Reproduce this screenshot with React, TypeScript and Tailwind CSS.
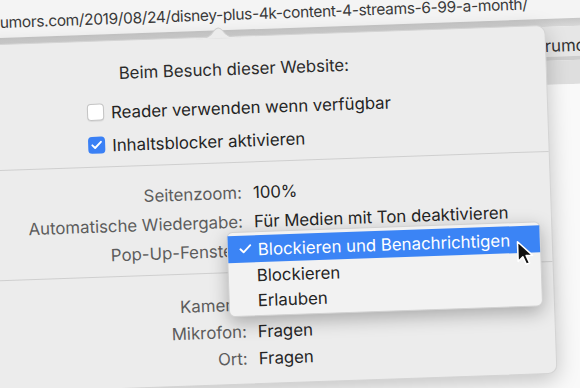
import { Check } from "lucide-react";

const font = { fontFamily: "Inter, 'Noto Sans', sans-serif" };

const topRows = [
  { label: "Seitenzoom:", value: "100%" },
  { label: "Automatische Wiedergabe:", value: "Für Medien mit Ton deaktivieren" },
  { label: "Pop-Up-Fenster:", value: "" },
];

const bottomRows = [
  { label: "Kamera:", value: "Fragen" },
  { label: "Mikrofon:", value: "Fragen" },
  { label: "Ort:", value: "Fragen" },
];

function SettingRow({ label, value, h }: { label: string; value: string; h: string }) {
  return (
    <div className={`flex items-center ${h}`}>
      <div className="w-[271px] text-right text-[#5c5c5c]">{label}</div>
      <div className="ml-[11px] text-[#242424]">{value}</div>
    </div>
  );
}

function Cursor() {
  return (
    <svg width="18" height="27" viewBox="0 0 16 24" className="absolute left-[288px] top-[14px]">
      <path
        d="M1.5 1.5 L1.5 19 L5.8 15 L8.7 21.8 L11.6 20.6 L8.8 14 L14.5 14 Z"
        fill="#111"
        stroke="#fff"
        strokeWidth="1.4"
        strokeLinejoin="round"
      />
    </svg>
  );
}

function PopupMenu() {
  return (
    <div className="absolute left-[254px] top-[195px] w-[314px] rounded-[6px] bg-[#f2f2f2] border border-[#d2d2d2] shadow-[0_6px_18px_rgba(0,0,0,0.28)] pt-[3px] pb-[3px]">
      <div className="relative flex items-center h-[27px] bg-[#3b84f5] text-white">
        <Check className="w-[15px] h-[15px] ml-[10px] text-white" strokeWidth={3} />
        <span className="ml-[5px]">Blockieren und Benachrichtigen</span>
        <Cursor />
      </div>
      <div className="flex items-center h-[25px] pl-[28px] text-[#242424]">Blockieren</div>
      <div className="flex items-center h-[25px] pl-[28px] text-[#242424]">Erlauben</div>
    </div>
  );
}

function Popover() {
  return (
    <div className="absolute left-0 top-[60px] w-[581px] h-[349px] rounded-[9px] bg-[#ececec] border border-[#d4d4d4] shadow-[0_6px_22px_rgba(0,0,0,0.22)] text-[16.8px] leading-[20px]">
      <svg width="44" height="12" viewBox="0 0 44 12" className="absolute left-[231px] -top-[11px]">
        <path d="M0 12 C10 12 14 10 18 4 Q22 -1 26 4 C30 10 34 12 44 12 Z" fill="#ececec" stroke="#cfcfcf" strokeWidth="1" />
        <rect x="0" y="11" width="44" height="2" fill="#ececec" />
      </svg>

      <div className="pt-[22px] pl-[152px] text-[#2b2b2b]">Beim Besuch dieser Website:</div>

      <div className="mt-[12px] pl-[119px]">
        <div className="flex items-center h-[33px]">
          <div className="w-[17px] h-[17px] rounded-[4px] bg-white border border-[#c4c4c4] shadow-[0_1px_1px_rgba(0,0,0,0.08)]" />
          <span className="ml-[7px] text-[#242424]">Reader verwenden wenn verfügbar</span>
        </div>
        <div className="flex items-center h-[33px]">
          <div className="w-[17px] h-[17px] rounded-[4px] bg-[#3a80f5] flex items-center justify-center">
            <Check className="w-[13px] h-[13px] text-white" strokeWidth={3.5} />
          </div>
          <span className="ml-[7px] text-[#242424]">Inhaltsblocker aktivieren</span>
        </div>
      </div>

      <div className="mt-[5px] h-px bg-[#cfcfcf]" />

      <div className="mt-[15px]">
        {topRows.map((r) => (
          <SettingRow key={r.label} label={r.label} value={r.value} h="h-[29px]" />
        ))}
      </div>

      <div className="mt-[7px] h-px bg-[#cfcfcf]" />

      <div className="mt-[18px]">
        {bottomRows.map((r) => (
          <SettingRow key={r.label} label={r.label} value={r.value} h="h-[27px]" />
        ))}
      </div>

      <PopupMenu />
    </div>
  );
}

export default function App() {
  return (
    <div className="relative w-[580px] h-[388px] overflow-hidden bg-[#f8f8f8]" style={font}>
      <div className="absolute -left-[30px] -top-[26px] w-[640px] h-[440px] -rotate-2 flex flex-col">
        <div className="h-[54px] bg-[#f4f4f4] pt-[29px] pl-[36px] text-[15.5px] tracking-[-0.35px] leading-[20px] text-[#3a3a3a] whitespace-nowrap">
          umors.com/2019/08/24/disney-plus-4k-content-4-streams-6-99-a-month/
        </div>
        <div className="h-[8px] bg-gradient-to-b from-[#c6c6c6] to-[#d8d8d8]" />
        <div className="h-[30px] bg-[#e6e6e6] pl-[546px] pt-[9px] text-[16.8px] leading-[20px] text-[#333] whitespace-nowrap">
          macrumors
        </div>
        <div className="h-[4px] bg-[#cdcdcd]" />
        <div className="h-[24px] bg-[#dedede]" />
        <div className="flex-1 bg-[#f9f9f9]" />

        <Popover />
      </div>
    </div>
  );
}
